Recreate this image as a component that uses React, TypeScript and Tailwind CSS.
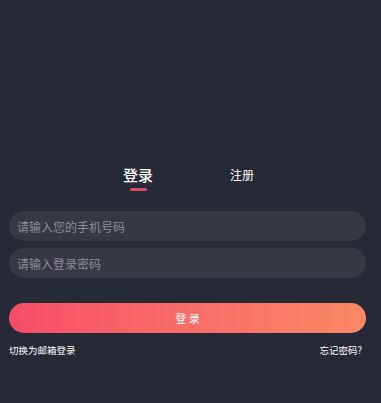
export default function App() {
  return (
    <div
      className="min-h-screen w-full bg-[#262a36] pl-[9px] pr-[15px] pt-[165px] text-white"
      style={{ fontFamily: '"Noto Sans CJK SC", "Noto Sans", sans-serif' }}
    >
      {/* Tabs */}
      <div className="flex justify-center pl-[5px]">
        <div className="flex w-[104px] flex-col items-center">
          <span className="text-[15px] leading-[20px] font-medium">登录</span>
          <div className="mt-[3px] h-[3px] w-[17px] rounded-full bg-[#e0496c]" />
        </div>
        <div className="flex w-[104px] flex-col items-center">
          <span className="text-[12px] leading-[20px]">注册</span>
        </div>
      </div>

      {/* Inputs */}
      <div className="mt-[20px] flex flex-col gap-[7px]">
        <input
          className="h-[30px] w-full rounded-full bg-[#363944] pl-[8px] text-[12px] text-white outline-none placeholder:text-[#8b8d96]"
          placeholder="请输入您的手机号码"
        />
        <input
          type="password"
          className="h-[30px] w-full rounded-full bg-[#363944] pl-[8px] text-[12px] text-white outline-none placeholder:text-[#8b8d96]"
          placeholder="请输入登录密码"
        />
      </div>

      {/* Submit */}
      <button className="mt-[25px] flex h-[30px] w-full items-center justify-center rounded-full bg-gradient-to-r from-[#f64c68] to-[#f98865] text-[11px] text-white">
        登 录
      </button>

      {/* Links */}
      <div className="mt-[10px] flex items-center justify-between pr-[4px] text-[9.5px] leading-[14px] text-white">
        <span>切换为邮箱登录</span>
        <span>忘记密码?</span>
      </div>
    </div>
  );
}
